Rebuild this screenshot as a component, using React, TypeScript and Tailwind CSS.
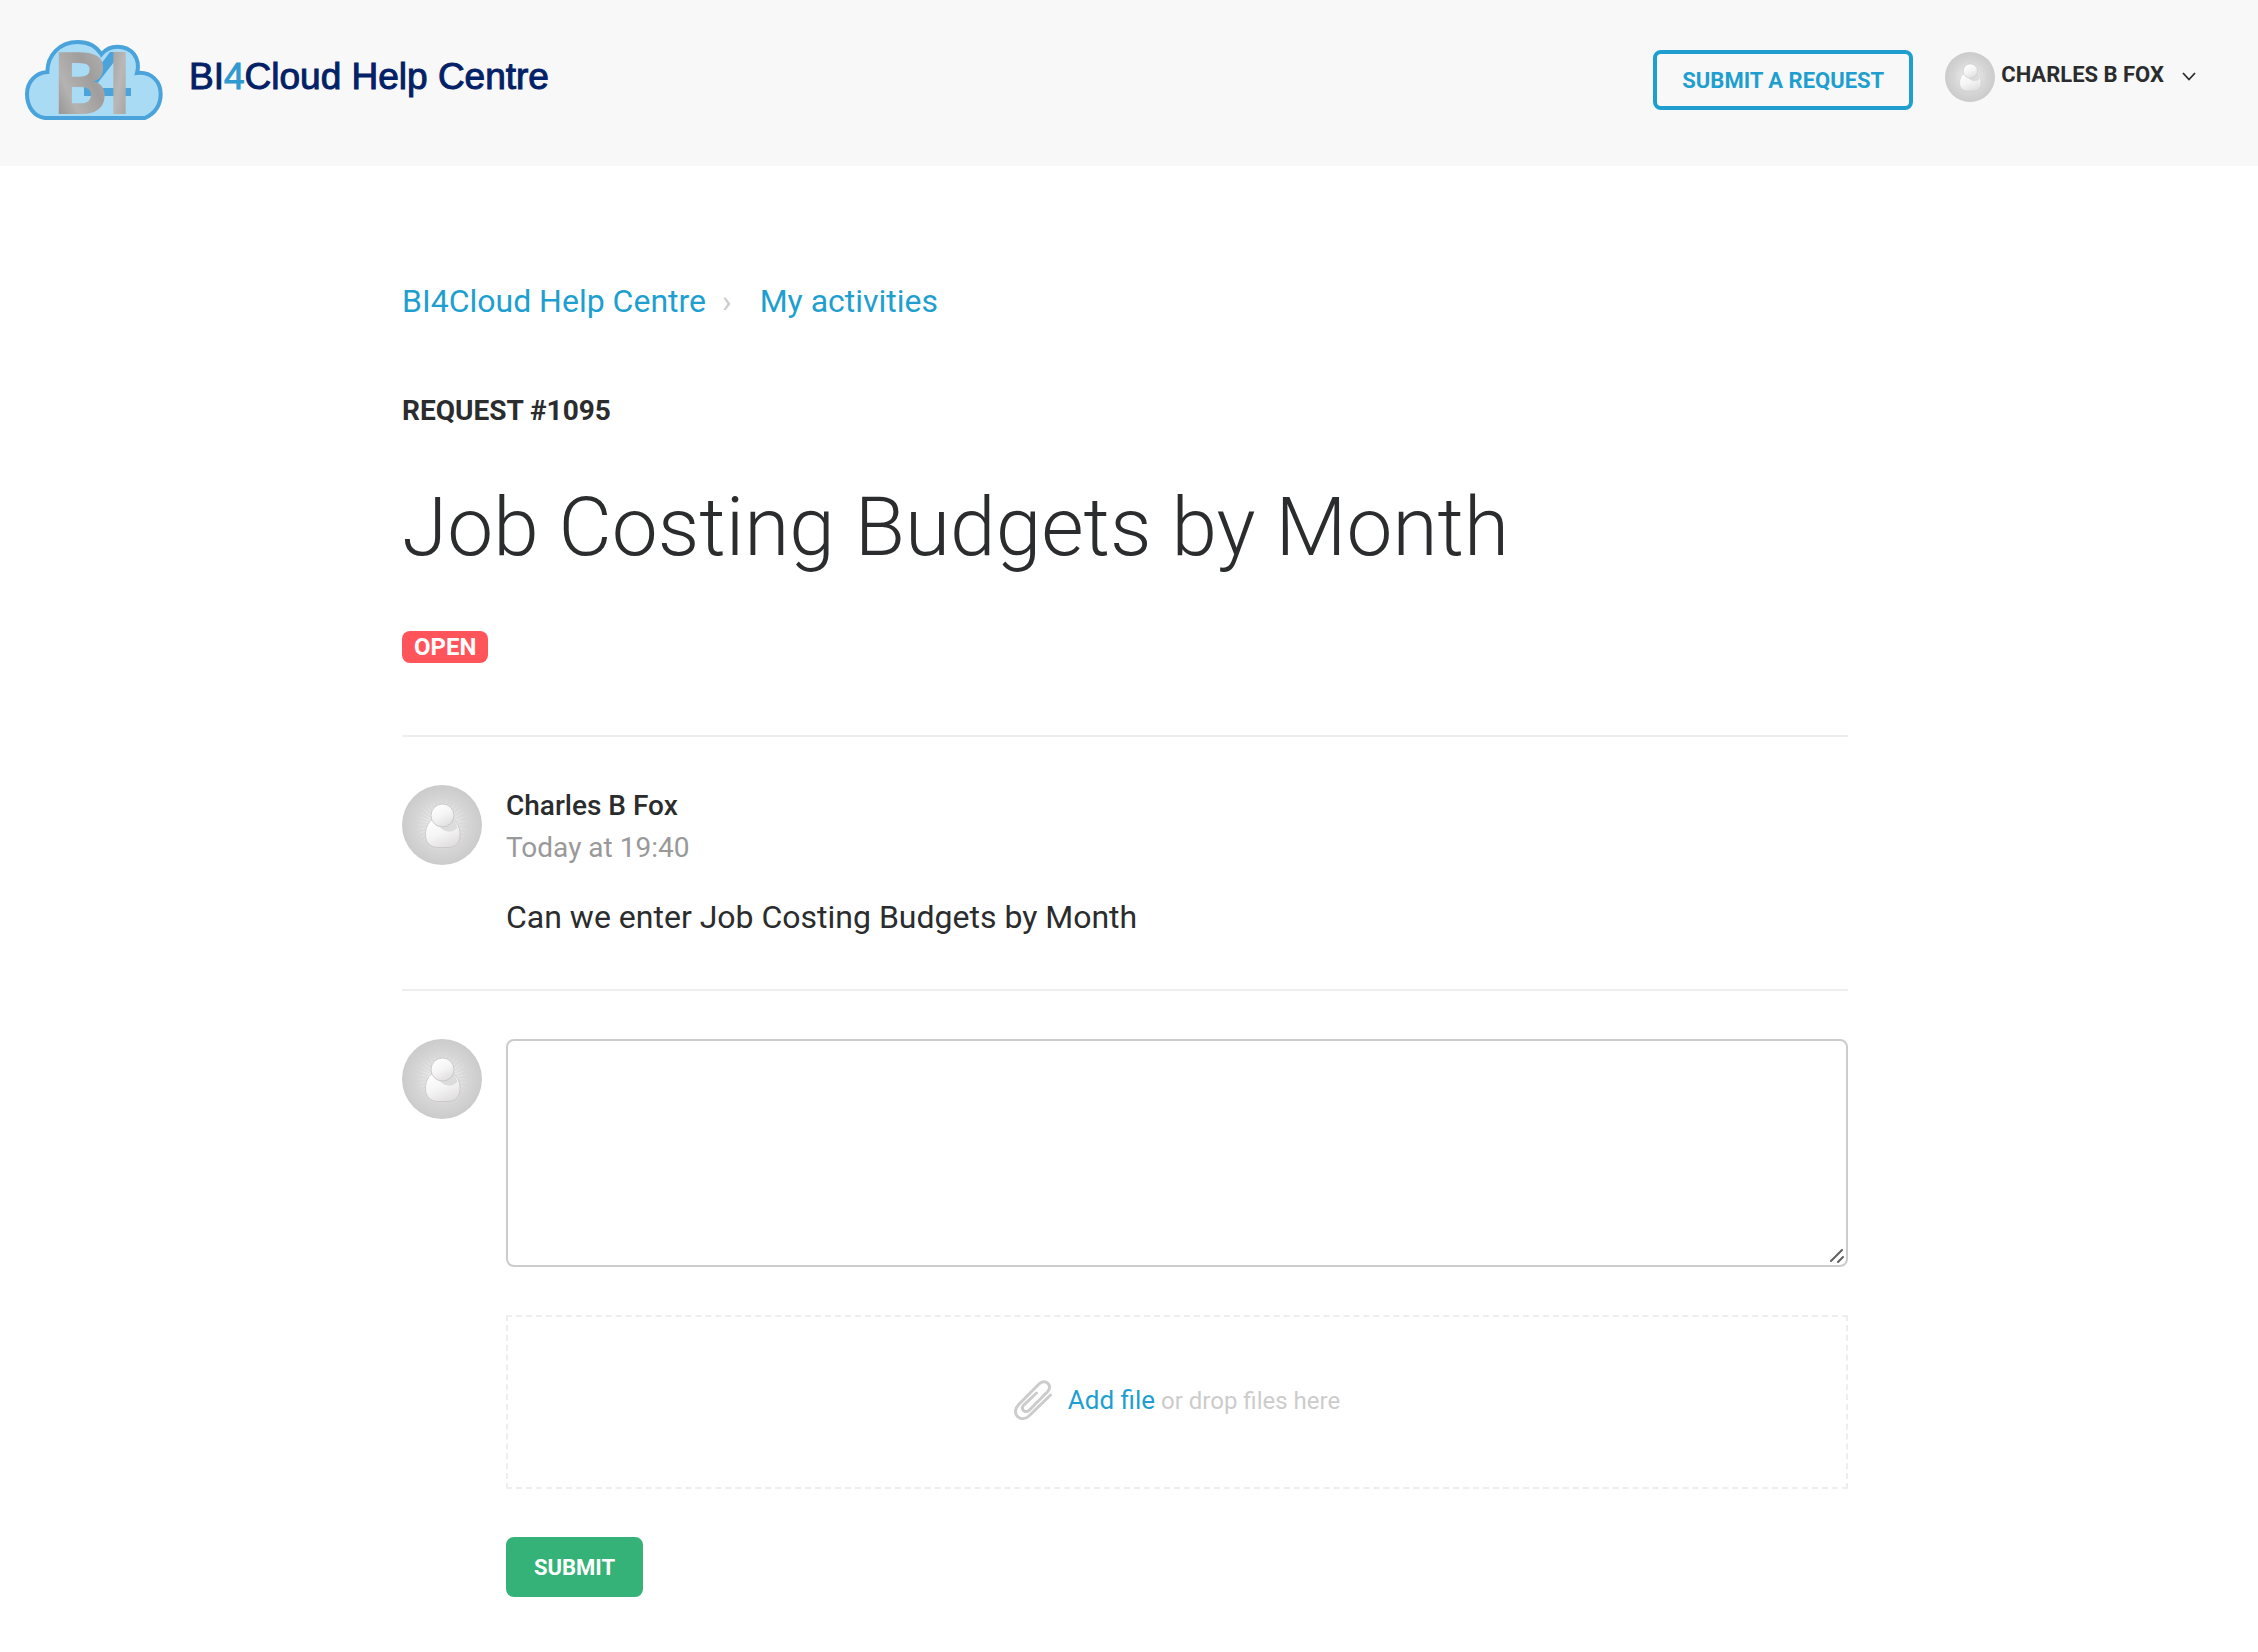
import React, { useId } from "react";

function CloudLogo() {
  return (
    <svg viewBox="75 60 414 240" className="h-20 w-[138px] shrink-0 overflow-visible" aria-hidden="true">
      <defs>
        <linearGradient id="metal" x1="0" y1="1" x2="1" y2="0">
          <stop offset="0" stopColor="#7d7b7a" />
          <stop offset="0.35" stopColor="#b4b3b2" />
          <stop offset="0.6" stopColor="#a09e9d" />
          <stop offset="1" stopColor="#bdbcbc" />
        </linearGradient>
        <linearGradient id="bar" x1="0" y1="0" x2="1" y2="1">
          <stop offset="0" stopColor="#a9a7a6" />
          <stop offset="0.5" stopColor="#b9b8b7" />
          <stop offset="1" stopColor="#a8a7a6" />
        </linearGradient>
      </defs>
      <path
        d="M135 294C102 290 81 260 81 222C81 185 108 158 142 156C142 105 180 66 233 66C265 66 290 80 304 103C318 86 335 80 352 80C395 80 423 115 411 159C455 155 482 185 482 222C482 255 465 280 435 294Z"
        fill="#a9dcf4"
        stroke="#4aa3da"
        strokeWidth="12"
      />
      <path d="M330 96H345V122L275 212H252V200Z" fill="#4aa3da" />
      <rect x="252" y="204" width="141" height="24" fill="#4aa3da" />
      <text x="153" y="282" fontFamily="Open Sans" fontWeight="700" fontSize="260" fill="url(#metal)">B</text>
      <rect x="340" y="96" width="37" height="186" fill="url(#bar)" />
    </svg>
  );
}

function Avatar({ className }: { className: string }) {
  const id = useId();
  const rays = Array.from({ length: 36 }, (_, i) => i * 10);
  return (
    <svg viewBox="0 0 80 80" className={className} aria-hidden="true">
      <defs>
        <radialGradient id={id + "bg"}>
          <stop offset="0" stopColor="#e6e6e6" />
          <stop offset="0.5" stopColor="#dadada" />
          <stop offset="1" stopColor="#cbcbcb" />
        </radialGradient>
        <linearGradient id={id + "fg"} x1="0.2" y1="0" x2="0.7" y2="1">
          <stop offset="0" stopColor="#ffffff" />
          <stop offset="0.5" stopColor="#f6f5f6" />
          <stop offset="1" stopColor="#dfddde" />
        </linearGradient>
      </defs>
      <circle cx="40" cy="40" r="40" fill={`url(#${id}bg)`} />
      {rays.map((a) => (
        <path key={a} d="M40 13L40.6 28H39.4Z" fill="#eeeeee" opacity="0.8" transform={`rotate(${a} 40 40)`} />
      ))}
      <path
        d="M31 34C25 38 23.500 44 23.500 50C23.500 58 29 62.500 36 62.500H46C53 62.500 58 58 58 50C58 43 56 38 51 34Z"
        fill={`url(#${id}fg)`}
        stroke="#c6c4c5"
        strokeWidth="0.8"
      />
      <path d="M38 42C43 48 50 48 55.500 43C54 38 53 36 51 34Z" fill="#dddcdc" />
      <circle cx="40.500" cy="30.500" r="11.500" fill={`url(#${id}fg)`} stroke="#c2c2c2" strokeWidth="0.8" />
    </svg>
  );
}

function Paperclip() {
  return (
    <svg viewBox="0 0 38 40" className="h-10 w-[38px] shrink-0 overflow-visible" fill="none" stroke="#cccccc" strokeWidth="3" strokeLinecap="round" strokeLinejoin="round" aria-hidden="true">
      <path d="M36.500 15L15.500 35.500C11.500 39.500 6.500 39.500 3.500 36.500C0.500 33.500 0.800 28.500 4.500 24.800L25 4C28 1 31.500 1 34 3.500C36.200 6 36 9 33.500 11.700L15.500 30C13.500 32 11 32 9.500 30.500C8 29 8 26.800 10 24.800L22.500 13" />
    </svg>
  );
}

export default function App() {
  return (
    <div className="min-h-screen bg-white font-[Roboto,sans-serif] text-[#2b2c2d]">
      <header className="flex items-start justify-between bg-[#f8f8f8] pb-[46px] pl-[25px] pr-[62px] pt-10">
        <a href="#" className="flex items-start gap-[26px]">
          <CloudLogo />
          <span className="mt-[17px] font-['Liberation_Sans',sans-serif] text-[37px] leading-10 text-[#032166] [-webkit-text-stroke:1px]">
            BI<span className="text-[#2f9ad0]">4</span>Cloud Help Centre
          </span>
        </a>
        <div className="flex items-start gap-8 pt-[10px]">
          <a href="#" className="flex h-[60px] items-center rounded-lg border-4 border-[#1e9fd0] px-[25px] text-[22px] font-bold text-[#1e9fd0]">
            SUBMIT A REQUEST
          </a>
          <button type="button" className="flex items-start gap-[6px] pt-[2px] text-[22px] font-bold leading-[46px]">
            <Avatar className="size-[50px]" />
            <span>CHARLES B FOX</span>
            <svg viewBox="0 0 14 9" className="ml-3 mt-5 h-[9px] w-[14px]" fill="none" stroke="#2b2c2d" strokeWidth="1.800" aria-hidden="true">
              <path d="M1 1L7 7.500L13 1" />
            </svg>
          </button>
        </div>
      </header>

      <main className="pr-2">
        <div className="mx-auto max-w-[1446px] pb-[54px] pt-[111px]">
          <nav aria-label="Breadcrumb" className="flex text-[32px] leading-[48px] text-[#1e9fd0]">
            <a href="#">BI4Cloud Help Centre</a>
            <span className="pl-4 pr-7 text-[#cccccc]">›</span>
            <a href="#">My activities</a>
          </nav>
          <p className="mt-[66px] text-[28px] font-bold leading-10">REQUEST #1095</p>
          <h1 className="mt-[46px] text-[82px] font-light leading-[100px]">Job Costing Budgets by Month</h1>
          <div className="mb-[72px] mt-[54px] flex">
            <span className="rounded-lg bg-[#ff555a] px-3 text-[24px] font-bold leading-8 text-white">OPEN</span>
          </div>

          <article className="flex gap-6 border-y-2 border-[#eeeeee] py-12">
            <Avatar className="size-20 shrink-0" />
            <div>
              <p className="text-[28px] font-medium leading-[42px]">Charles B Fox</p>
              <p className="text-[28px] leading-[42px] text-[#999999]">Today at 19:40</p>
              <p className="mt-6 text-[32px] leading-[48px]">Can we enter Job Costing Budgets by Month</p>
            </div>
          </article>

          <form className="flex gap-6 pt-12" onSubmit={(e) => e.preventDefault()}>
            <Avatar className="size-20 shrink-0" />
            <div className="flex min-w-0 flex-1 flex-col items-start gap-12">
              <div className="relative w-full">
                <textarea
                  aria-label="Add to conversation"
                  className="block h-[228px] w-full resize-none rounded-lg border-2 border-[#cccccc] bg-white p-4 text-[28px] outline-none"
                />
                <svg viewBox="0 0 14 14" className="pointer-events-none absolute bottom-1 right-1 size-[14px]" stroke="#606060" strokeWidth="2" strokeLinecap="round" aria-hidden="true">
                  <path d="M1 12L12 1M8 13L13 8" />
                </svg>
              </div>
              <div className="flex h-[174px] w-full items-center justify-center border-2 border-dashed border-[#eeeeee] pb-1">
                <Paperclip />
                <p className="ml-4 text-[24px] leading-10 text-[#cccccc]">
                  <button type="button" className="text-[26px] text-[#1e9fd0]">Add file</button> or drop files here
                </p>
              </div>
              <button type="submit" className="h-[60px] rounded-lg bg-[#34b277] px-7 text-[22px] font-bold text-white">
                SUBMIT
              </button>
            </div>
          </form>
        </div>
      </main>
    </div>
  );
}
